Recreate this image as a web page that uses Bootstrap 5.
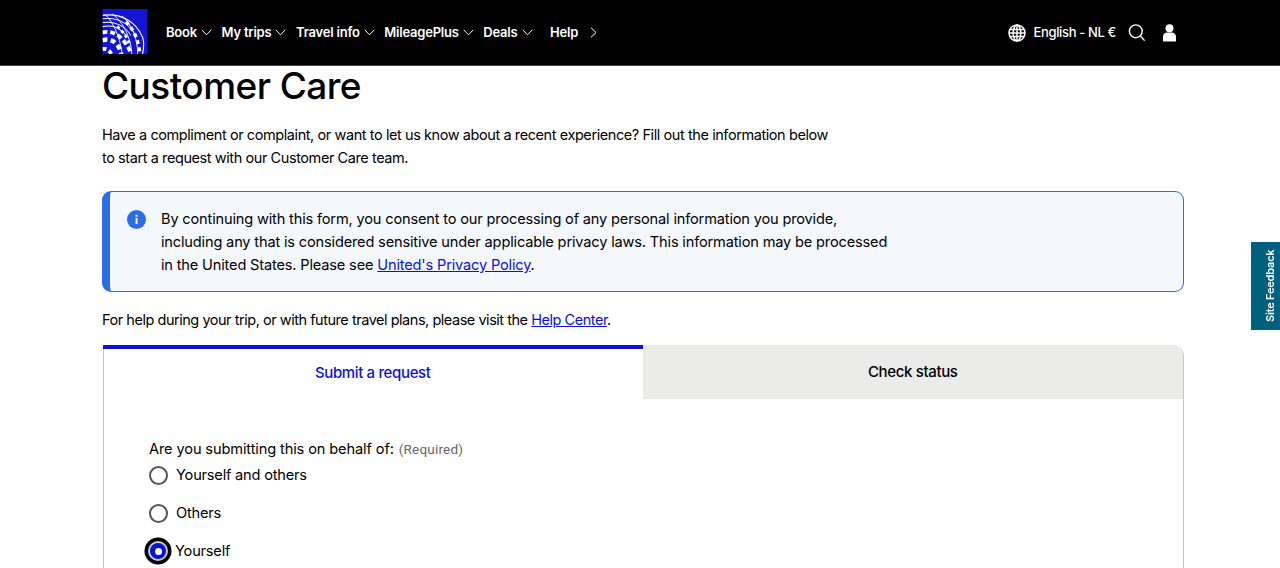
<!DOCTYPE html>
<html lang="en">
<head>
<meta charset="utf-8">
<title>Customer Care</title>
<link href="https://cdn.jsdelivr.net/npm/bootstrap@5.3.0/dist/css/bootstrap.min.css" rel="stylesheet">
<style>
html,body{height:568px;overflow:hidden}
body{font-family:"Inter","Liberation Sans",sans-serif;color:#000;font-size:14.5px;letter-spacing:-.45px;background:#fff}
.topbar{height:66px;background:#000;border-bottom:1px solid #444;padding:0 103px 0 102px}
.brandmark{width:46px;height:45px;display:block;margin-top:-3px}
.topnav{margin-left:18px;gap:9.5px}
.topnav a,.toplang{color:#fff;text-decoration:none;font-weight:600;font-size:13px;letter-spacing:-.2px;display:flex;align-items:center;gap:4px}
.toplang{font-weight:500;margin-left:-1px;letter-spacing:-.35px}
.topnav svg{display:block}
.pagewrap{padding:0 96px 0 102px}
.pagetitle{font-size:37px;font-weight:500;line-height:40px;letter-spacing:-.55px;margin:0}
.introtext{margin:17px 0 0;line-height:23px;max-width:735px;letter-spacing:-.42px}
.noticebox{margin-top:22px;height:101px;border:1px solid #2b6de8;border-left:8px solid #2b6de8;border-radius:9px;background:#f4f8fd;padding:16px 18px 0 17px;gap:15px}
.noticebox p{margin:0;line-height:23px;font-size:14.6px;letter-spacing:-.17px}
.noticebox a,.helpline a{color:#0c10dc}
.infodot{flex:none;margin-top:2px}
.helpline{margin:16px 0 0;line-height:23px;letter-spacing:-.47px}
.tabframe{margin-top:14px;margin-left:1px;border:1px solid #c8c8c8;border-top:0;border-radius:0 12px 0 0;height:300px}
.tabhead{height:54px}
.tabitem{width:50%;display:flex;align-items:center;justify-content:center;font-weight:500;font-size:15px;letter-spacing:-.35px}
.tabon{color:#0c10dc;border-top:4px solid #0c10dc;margin-left:-1px;padding-bottom:2px}
.taboff{background:#ebebe9;border-radius:0 12px 0 0;flex:1}
.formzone{padding:40px 0 0 45px}
.fieldtitle{line-height:20px;margin-bottom:-2px;font-size:14.6px;letter-spacing:-.12px}
.fieldtitle span{color:#666;font-size:13.5px;font-weight:400;margin-left:1px;font-family:"Roboto",sans-serif;letter-spacing:.2px}
.radioline{height:38px;gap:8px;font-size:14.6px;letter-spacing:-.2px}
.radiobox{width:19px;height:19px;border:2px solid #555;border-radius:50%;flex:none;margin-top:-2px}
.radioon{border:0;background:#0c10dc;box-shadow:0 0 0 2px #ccc,0 0 0 5.5px #000;width:16px;height:16px;margin:-2px 1px 0 1px;display:flex;align-items:center;justify-content:center}
.radioon i{display:block;width:7px;height:7px;border-radius:50%;background:#fff}
.feedbacktab{position:fixed;right:0;top:242px;width:29px;height:88px;padding-right:10px;background:#00607f;color:#fff;writing-mode:vertical-rl;transform:rotate(180deg);font-size:11px;font-weight:600;letter-spacing:-.2px;display:flex;align-items:center;justify-content:center}
</style>
</head>
<body>
<header class="topbar d-flex align-items-center">
  <svg class="brandmark" viewBox="0 0 46 46" aria-label="United logo">
    <rect width="46" height="46" fill="#1414d4"/>
    <clipPath id="c"><rect width="46" height="46"/></clipPath>
    <g clip-path="url(#c)" fill="none" stroke="#fff">
      <path d="M0 6.5C18 4 34 12 41 29 43 35 42 41 41 46" stroke-width="1.2"/>
      <path d="M0 10C14 8 27 14 34 27" stroke-width="1"/>
      <path d="M0 14C12 12 23 17 29 27" stroke-width="1"/>
      <path d="M0 18C9 16 18 19 24 27" stroke-width="1.1"/>
      <path d="M2 5C12 14 18 30 20 46" stroke-width=".9"/>
      <path d="M10 5C22 14 29 30 30 46" stroke-width=".9"/>
      <path d="M20 7C30 16 36 30 36 46" stroke-width=".9"/>
      <path d="M0 24C8 22 16 25 22 33 26 38 28 42 29 46" stroke-width="4" stroke-dasharray="5 3"/>
      <path d="M0 32C6 30 12 32 16 38 18 41 19 44 19 46" stroke-width="4.5" stroke-dasharray="5 3.5"/>
      <path d="M0 41C4 40 7 42 9 46" stroke-width="4" stroke-dasharray="4 3"/>
      <path d="M24 13C30 19 36 28 38 44" stroke-width="3.5" stroke-dasharray="4 3.5"/>
      <path d="M15 18C22 24 27 31 28 38" stroke-width="3" stroke-dasharray="3 3"/>
    </g>
  </svg>
  <nav class="topnav d-flex align-items-center">
    <a href="#">Book <svg width="11" height="7" viewBox="0 0 11 7" fill="none" stroke="#fff"><path d="M.7.8 5.5 5.8 10.3.8"/></svg></a>
    <a href="#">My trips <svg width="11" height="7" viewBox="0 0 11 7" fill="none" stroke="#fff"><path d="M.7.8 5.5 5.8 10.3.8"/></svg></a>
    <a href="#">Travel info <svg width="11" height="7" viewBox="0 0 11 7" fill="none" stroke="#fff"><path d="M.7.8 5.5 5.8 10.3.8"/></svg></a>
    <a href="#">MileagePlus <svg width="11" height="7" viewBox="0 0 11 7" fill="none" stroke="#fff"><path d="M.7.8 5.5 5.8 10.3.8"/></svg></a>
    <a href="#">Deals <svg width="11" height="7" viewBox="0 0 11 7" fill="none" stroke="#fff"><path d="M.7.8 5.5 5.8 10.3.8"/></svg></a>
    <a href="#" class="ms-2">Help <svg class="ms-2" width="7" height="11" viewBox="0 0 7 11" fill="none" stroke="#fff"><path d="M1 .7 6 5.5 1 10.3"/></svg></a>
  </nav>
  <div class="ms-auto d-flex align-items-center gap-2">
    <svg width="18" height="18" viewBox="0 0 18 18" fill="none" stroke="#fff" stroke-width="1.5"><circle cx="9" cy="9" r="8"/><ellipse cx="9" cy="9" rx="3.8" ry="8"/><path d="M1.5 5.5h15M1 9h16M1.5 12.5h15M9 1v16"/></svg>
    <span class="toplang">English - NL €</span>
    <svg class="ms-1" width="18" height="18" viewBox="0 0 18 18" fill="none" stroke="#fff" stroke-width="1.4"><circle cx="7.8" cy="7.3" r="6.4"/><path d="M12.4 12 16.6 16.6"/></svg>
    <svg class="ms-2" width="15" height="18" viewBox="0 0 15 18" fill="#fff"><circle cx="7.5" cy="4.2" r="4"/><path d="M1 17.5V12.5C1 10 3.5 8.6 5 8.6H10C11.5 8.6 14 10 14 12.5V17.5Z"/></svg>
  </div>
</header>
<main class="pagewrap">
  <h1 class="pagetitle">Customer Care</h1>
  <p class="introtext">Have a compliment or complaint, or want to let us know about a recent experience? Fill out the information below to start a request with our Customer Care team.</p>
  <div class="noticebox d-flex">
    <svg class="infodot" width="19" height="19" viewBox="0 0 19 19"><circle cx="9.5" cy="9.5" r="9.5" fill="#2b6de8"/><rect x="8.6" y="8" width="1.9" height="6" fill="#fff"/><rect x="8.6" y="4.8" width="1.9" height="1.9" fill="#fff"/></svg>
    <p>By continuing with this form, you consent to our processing of any personal information you provide,<br>including any that is considered sensitive under applicable privacy laws. This information may be processed<br>in the United States. Please see <a href="#">United's Privacy Policy</a>.</p>
  </div>
  <p class="helpline">For help during your trip, or with future travel plans, please visit the <a href="#">Help Center</a>.</p>
  <section class="tabframe">
    <div class="tabhead d-flex">
      <div class="tabitem tabon">Submit a request</div>
      <div class="tabitem taboff">Check status</div>
    </div>
    <div class="formzone">
      <div class="fieldtitle">Are you submitting this on behalf of: <span>(Required)</span></div>
      <div class="radioline d-flex align-items-center"><span class="radiobox"></span>Yourself and others</div>
      <div class="radioline d-flex align-items-center"><span class="radiobox"></span>Others</div>
      <div class="radioline d-flex align-items-center"><span class="radiobox radioon"><i></i></span>Yourself</div>
    </div>
  </section>
</main>
<div class="feedbacktab">Site Feedback</div>
<script src="https://cdn.jsdelivr.net/npm/bootstrap@5.3.0/dist/js/bootstrap.bundle.min.js"></script>
</body>
</html>
